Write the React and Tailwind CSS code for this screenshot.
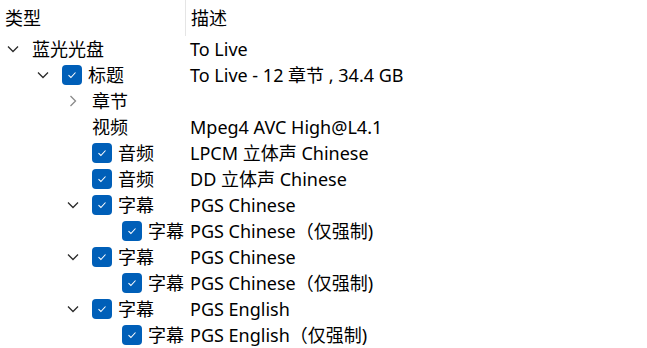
import React from 'react';

const rows = [
  { level: 0, chevron: 'down', check: false, type: '蓝光光盘', desc: 'To Live' },
  { level: 1, chevron: 'down', check: true, type: '标题', desc: 'To Live - 12 章节 , 34.4 GB' },
  { level: 2, chevron: 'right', check: false, type: '章节', desc: '' },
  { level: 2, chevron: null, check: false, type: '视频', desc: 'Mpeg4 AVC High@L4.1' },
  { level: 2, chevron: null, check: true, type: '音频', desc: 'LPCM 立体声 Chinese' },
  { level: 2, chevron: null, check: true, type: '音频', desc: 'DD 立体声 Chinese' },
  { level: 2, chevron: 'down', check: true, type: '字幕', desc: 'PGS Chinese' },
  { level: 3, chevron: null, check: true, type: '字幕', desc: 'PGS Chinese（仅强制)' },
  { level: 2, chevron: 'down', check: true, type: '字幕', desc: 'PGS Chinese' },
  { level: 3, chevron: null, check: true, type: '字幕', desc: 'PGS Chinese（仅强制)' },
  { level: 2, chevron: 'down', check: true, type: '字幕', desc: 'PGS English' },
  { level: 3, chevron: null, check: true, type: '字幕', desc: 'PGS English（仅强制)' },
];

const indent = ['w-0', 'w-[30px]', 'w-[60px]', 'w-[90px]'];

const Chevron = ({ dir }) => {
  if (dir === 'down') {
    return (
      <svg width="12" height="8" viewBox="0 0 12 8" className="text-[#2b2b2b]">
        <path d="M1 1.5 L6 6.5 L11 1.5" fill="none" stroke="currentColor" strokeWidth="1.3" />
      </svg>
    );
  }
  return (
    <svg width="8" height="12" viewBox="0 0 8 12" className="text-[#8a8a8a]">
      <path d="M1.5 1 L6.5 6 L1.5 11" fill="none" stroke="currentColor" strokeWidth="1.3" />
    </svg>
  );
};

const Check = () => (
  <div className="w-[20px] h-[20px] rounded-[4px] bg-[#005fb8] flex items-center justify-center mr-[6px] shrink-0">
    <svg width="10" height="8" viewBox="0 0 10 8">
      <path d="M1.5 4.2 L3.9 6.5 L8.5 1.5" fill="none" stroke="white" strokeWidth="1.1" />
    </svg>
  </div>
);

export default function App() {
  return (
    <div
      className="w-[647px] h-[348px] bg-white text-black text-[18px] overflow-hidden"
      style={{ fontFamily: '"Noto Sans", "Noto Sans CJK SC", sans-serif' }}
    >
      {/* header */}
      <div className="flex h-[36px]">
        <div className="w-[186px] pl-[5px] border-r border-[#e5e5e5] flex items-center">类型</div>
        <div className="pl-[5px] flex items-center">描述</div>
      </div>

      {rows.map((r, i) => (
        <div key={i} className="flex h-[26px] items-center leading-none">
          <div className="w-[190px] flex items-center shrink-0">
            <div className={`${indent[r.level]} shrink-0`} />
            <div className="w-[32px] h-[26px] flex items-center justify-center shrink-0 pr-[7px]">
              {r.chevron && <Chevron dir={r.chevron} />}
            </div>
            {r.check && <Check />}
            <span className="whitespace-nowrap">{r.type}</span>
          </div>
          <div className="whitespace-nowrap">{r.desc}</div>
        </div>
      ))}
    </div>
  );
}
